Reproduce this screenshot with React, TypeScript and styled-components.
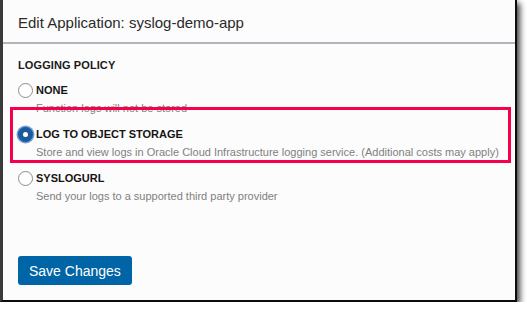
import React from 'react'
import styled, { createGlobalStyle, css } from 'styled-components'

const GlobalStyle = createGlobalStyle`
  html, body {
    margin: 0;
    padding: 0;
    background: #ffffff;
  }
  body {
    font-family: "Liberation Sans", Arial, Helvetica, sans-serif;
    color: #161513;
  }
`

const Frame = styled.div`
  position: relative;
  width: 512px;
  height: 300px;
  background: #fcfcfc;
  border-left: 3px solid #3a3a3a;
  border-right: 2px solid #0c0c0c;
  border-bottom: 2px solid #0c0c0c;
  box-shadow: 3px 3px 6px rgba(0, 0, 0, 0.75);
  display: flex;
  flex-direction: column;
`

const Header = styled.div`
  box-sizing: border-box;
  height: 44px;
  padding-top: 3px;
  border-bottom: 2px solid #b4b4bc;
  display: flex;
  align-items: center;
  padding-left: 15px;
  font-size: 15px;
  color: #2b2b2b;
`

const Body = styled.div`
  padding: 13px 15px 0 15px;
  display: flex;
  flex-direction: column;
`

const SectionTitle = styled.div`
  font-size: 11px;
  font-weight: bold;
  letter-spacing: 0.1px;
  line-height: 16px;
  color: #1a1a1a;
  margin-bottom: 8px;
`

const OptionList = styled.div`
  display: flex;
  flex-direction: column;
  gap: 8px;
`

const Option = styled.div`
  display: flex;
  flex-direction: column;
`

const OptionRow = styled.div`
  display: flex;
  align-items: center;
  height: 18px;
`

const Radio = styled.span<{ checked?: boolean }>`
  box-sizing: border-box;
  width: 15px;
  height: 15px;
  margin-right: 3px;
  border-radius: 50%;
  border: 1px solid #8a8a8a;
  background: #ffffff;
  display: flex;
  align-items: center;
  justify-content: center;
  flex-shrink: 0;
  ${({ checked }) =>
    checked &&
    css`
      border: none;
      background: #1d5a9c;
      box-shadow: 0 0 0 1.5px #6f9fd6;
      &::after {
        content: '';
        width: 5px;
        height: 5px;
        border-radius: 50%;
        background: #ffffff;
      }
    `}
`

const OptionLabel = styled.span`
  font-size: 11px;
  font-weight: bold;
  color: #161513;
`

const OptionDesc = styled.div`
  padding-left: 18px;
  font-size: 11px;
  line-height: 18px;
  color: #808080;
  white-space: nowrap;
`

const Footer = styled.div`
  margin-top: auto;
  padding: 0 15px 15px 15px;
`

const SaveButton = styled.button`
  font-family: "Liberation Sans", Arial, Helvetica, sans-serif;
  font-size: 14px;
  color: #ffffff;
  background: #0065a6;
  border: none;
  border-radius: 3px;
  height: 29px;
  padding: 0 11px;
  cursor: pointer;
`

const Highlight = styled.div`
  position: absolute;
  left: 7px;
  top: 107px;
  width: 495px;
  height: 50px;
  border: 3px solid #f4004c;
  pointer-events: none;
`

const options = [
  { label: 'NONE', desc: 'Function logs will not be stored', checked: false },
  {
    label: 'LOG TO OBJECT STORAGE',
    desc: 'Store and view logs in Oracle Cloud Infrastructure logging service. (Additional costs may apply)',
    checked: true,
  },
  { label: 'SYSLOGURL', desc: 'Send your logs to a supported third party provider', checked: false },
]

export default function App() {
  return (
    <>
      <GlobalStyle />
      <Frame>
        <Header>Edit Application: syslog-demo-app</Header>
        <Body>
          <SectionTitle>LOGGING POLICY</SectionTitle>
          <OptionList>
            {options.map((o) => (
              <Option key={o.label}>
                <OptionRow>
                  <Radio checked={o.checked} />
                  <OptionLabel>{o.label}</OptionLabel>
                </OptionRow>
                <OptionDesc>{o.desc}</OptionDesc>
              </Option>
            ))}
          </OptionList>
        </Body>
        <Footer>
          <SaveButton>Save Changes</SaveButton>
        </Footer>
        <Highlight />
      </Frame>
    </>
  )
}
